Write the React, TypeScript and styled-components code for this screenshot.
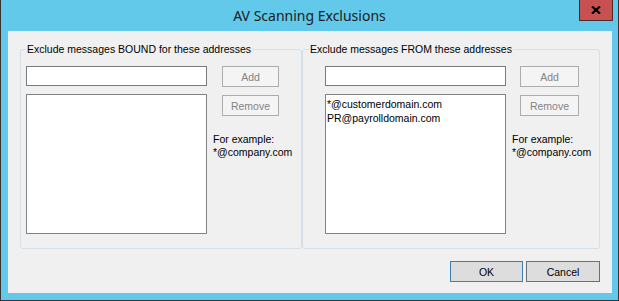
import React from 'react';
import styled, { createGlobalStyle } from 'styled-components';

const GlobalStyle = createGlobalStyle`
  html, body {
    margin: 0;
    padding: 0;
    background: #ffffff;
  }
  * {
    box-sizing: border-box;
  }
`;

const Window = styled.div`
  width: 619px;
  height: 301px;
  background: #63c9ea;
  border: 1px solid #353535;
  border-top: none;
  display: flex;
  flex-direction: column;
  font-family: "Liberation Sans", Arial, sans-serif;
  font-size: 10.5px;
  color: #000;
`;

const TitleBar = styled.div`
  height: 31px;
  display: grid;
  grid-template-columns: 1fr auto 1fr;
  align-items: start;
`;

const Title = styled.div`
  grid-column: 2;
  line-height: 31px;
  font-family: "Noto Sans", "Open Sans", sans-serif;
  font-size: 14px;
  color: #202020;
`;

const CloseButton = styled.div`
  grid-column: 3;
  justify-self: end;
  margin-right: 5px;
  width: 34px;
  height: 21px;
  background: #c75050;
  border: 1px solid #4a2a2a;
  border-top: none;
  display: flex;
  align-items: center;
  justify-content: center;
`;

const Client = styled.div`
  flex: 1;
  margin: 0 6px 7px 7px;
  background: #f0f0f0;
  padding: 12px 12px 11px 12px;
  display: flex;
  flex-direction: column;
`;

const GroupRow = styled.div`
  flex: 1;
  display: flex;
`;

const Group = styled.fieldset<{ $width?: number }>`
  margin: 0;
  padding: 10px 0 0 0;
  border: 1px solid #d5dfe5;
  border-radius: 3px;
  min-width: 0;
  ${(p) => (p.$width ? `width: ${p.$width}px;` : 'flex: 1;')}
`;

const Legend = styled.legend<{ $offset: number }>`
  margin-left: ${(p) => p.$offset}px;
  padding: 0 1px;
  line-height: 13px;
  font-size: 10.5px;
`;

const GroupBody = styled.div<{ $padLeft: number }>`
  display: flex;
  gap: 6px;
  padding-left: ${(p) => p.$padLeft}px;
`;

const Fields = styled.div`
  width: 181px;
  display: flex;
  flex-direction: column;
  gap: 8px;
`;

const TextBox = styled.div`
  height: 20px;
  background: #ffffff;
  border: 1px solid #7a7a7a;
`;

const ListBox = styled.div`
  height: 140px;
  background: #ffffff;
  border: 1px solid #828282;
  padding: 2px 1px;
  line-height: 14px;
`;

const Side = styled.div`
  display: flex;
  flex-direction: column;
`;

const SideButton = styled.div<{ $indent: number; $width: number }>`
  margin-left: ${(p) => p.$indent}px;
  width: ${(p) => p.$width}px;
  height: 21px;
  margin-bottom: 8px;
  background: #f4f4f4;
  border: 1px solid #adadad;
  color: #838383;
  display: flex;
  align-items: center;
  justify-content: center;
`;

const Example = styled.div`
  margin-top: 9px;
  line-height: 13px;
  white-space: nowrap;
`;

const Footer = styled.div`
  margin-top: 12px;
  display: flex;
  justify-content: flex-end;
  gap: 3px;
`;

const DialogButton = styled.div<{ $default?: boolean; $width: number }>`
  width: ${(p) => p.$width}px;
  height: 21px;
  background: #dddddd;
  border: 1px solid ${(p) => (p.$default ? '#3c7fb1' : '#707070')};
  display: flex;
  align-items: center;
  justify-content: center;
`;

type PanelProps = {
  title: string;
  items: string[];
  width?: number;
  padLeft: number;
  legendOffset: number;
  indent: number;
  buttonWidth: number;
};

const Panel: React.FC<PanelProps> = ({ title, items, width, padLeft, legendOffset, indent, buttonWidth }) => (
  <Group $width={width}>
    <Legend $offset={legendOffset}>{title}</Legend>
    <GroupBody $padLeft={padLeft}>
      <Fields>
        <TextBox />
        <ListBox>
          {items.map((item) => (
            <div key={item}>{item}</div>
          ))}
        </ListBox>
      </Fields>
      <Side>
        <SideButton $indent={indent} $width={buttonWidth}>Add</SideButton>
        <SideButton $indent={indent} $width={buttonWidth}>Remove</SideButton>
        <Example>
          For example:
          <br />
          *@company.com
        </Example>
      </Side>
    </GroupBody>
  </Group>
);

const App: React.FC = () => {
  return (
    <>
      <GlobalStyle />
      <Window>
        <TitleBar>
          <Title>AV Scanning Exclusions</Title>
          <CloseButton>
            <svg width="10" height="8" viewBox="0 0 10 8">
              <path d="M1 0.5 L9 7.5 M9 0.5 L1 7.5" stroke="#000" strokeWidth="2.2" />
            </svg>
          </CloseButton>
        </TitleBar>
        <Client>
          <GroupRow>
            <Panel
              title="Exclude messages BOUND for these addresses"
              items={[]}
              width={282}
              padLeft={5}
              legendOffset={5}
              indent={9}
              buttonWidth={57}
            />
            <Panel
              title="Exclude messages FROM these addresses"
              items={['*@customerdomain.com', 'PR@payrolldomain.com']}
              padLeft={22}
              legendOffset={6}
              indent={8}
              buttonWidth={59}
            />
          </GroupRow>
          <Footer>
            <DialogButton $default $width={73}>OK</DialogButton>
            <DialogButton $width={74}>Cancel</DialogButton>
          </Footer>
        </Client>
      </Window>
    </>
  );
};

export default App;
